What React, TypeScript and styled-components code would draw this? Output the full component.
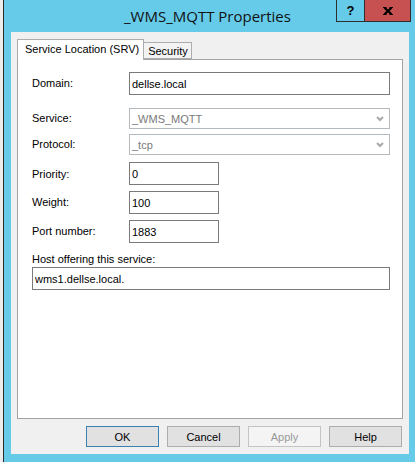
import styled, { createGlobalStyle } from "styled-components";

const GlobalStyle = createGlobalStyle`
  html, body {
    margin: 0;
    padding: 0;
    background: #ececec;
    font-family: "Liberation Sans", Arial, sans-serif;
    font-size: 11px;
    color: #000;
  }
`;

const Window = styled.div`
  margin-left: 3px;
  width: 411px;
  height: 462px;
  border-left: 1px solid #2b2b2b;
  background: #65cbe9;
  display: flex;
  flex-direction: column;
  overflow: hidden;
`;

const TitleBar = styled.div`
  height: 32px;
  display: grid;
  flex-shrink: 0;
`;

const Title = styled.div`
  grid-area: 1 / 1;
  justify-self: center;
  align-self: center;
  margin-left: -4px;
  font-family: "Open Sans", "Noto Sans", sans-serif;
  font-size: 15px;
  color: #111;
`;

const Caption = styled.div`
  grid-area: 1 / 1;
  justify-self: end;
  align-self: start;
  display: flex;
  margin-right: 4px;
`;

const CaptionButton = styled.div<{ $close?: boolean }>`
  height: 22px;
  box-sizing: border-box;
  width: ${(p) => (p.$close ? "47px" : "28px")};
  border: 1px solid #2e2e2e;
  border-top: none;
  border-right: ${(p) => (p.$close ? "1px solid #2e2e2e" : "none")};
  background: ${(p) => (p.$close ? "#c75050" : "#65cbe9")};
  display: flex;
  align-items: center;
  justify-content: center;
  font-weight: bold;
  font-size: 13px;
  color: #000;
`;

const Client = styled.div`
  margin: 0 6px 8px 7px;
  flex: 1;
  background: #f0f0f0;
  padding: 7px 6px 7px 6px;
  display: flex;
  flex-direction: column;
`;

const TabStrip = styled.div`
  height: 20px;
  display: flex;
  align-items: flex-end;
`;

const Tab = styled.div<{ $active?: boolean }>`
  box-sizing: border-box;
  position: relative;
  z-index: ${(p) => (p.$active ? 1 : 0)};
  height: ${(p) => (p.$active ? "21px" : "17px")};
  margin-bottom: ${(p) => (p.$active ? "-1px" : "0")};
  padding: ${(p) => (p.$active ? "3px 4px 0 7px" : "2px 3px 0 4px")};
  border: 1px solid #adadad;
  border-bottom: ${(p) => (p.$active ? "none" : "1px solid #adadad")};
  border-left: ${(p) => (p.$active ? "1px solid #adadad" : "none")};
  background: ${(p) => (p.$active ? "#fff" : "#f3f3f3")};
  white-space: nowrap;
`;

const Panel = styled.div`
  box-sizing: border-box;
  height: 360px;
  background: #fff;
  border: 1px solid #a3a3a3;
  padding: 12px 12px 0 14px;
  display: flex;
  flex-direction: column;
`;

const Row = styled.div<{ $top: number; $h: number; $full?: boolean }>`
  display: grid;
  grid-template-columns: ${(p) => (p.$full ? "1fr" : "97px 1fr")};
  align-items: center;
  margin-top: ${(p) => p.$top}px;
  height: ${(p) => p.$h}px;
`;

const Label = styled.div<{ $top?: number }>`
  margin-top: ${(p) => p.$top ?? 0}px;
  line-height: 13px;
`;

const TextBox = styled.input<{ $w?: number }>`
  box-sizing: border-box;
  width: ${(p) => (p.$w ? `${p.$w}px` : "100%")};
  height: 23px;
  border: 1px solid #7a7a7a;
  padding: 0 2px;
  margin: 0;
  font-family: "Liberation Sans", Arial, sans-serif;
  font-size: 11px;
  color: #000;
  background: #fff;
  outline: none;
`;

const Combo = styled.div`
  box-sizing: border-box;
  height: 21px;
  border: 1px solid #b4b9bd;
  padding: 0 5px 0 2px;
  display: flex;
  align-items: center;
  justify-content: space-between;
  color: #7a7a7a;
`;

const Buttons = styled.div`
  display: flex;
  justify-content: flex-end;
  gap: 8px;
  margin-top: 7px;
  padding-right: 1px;
`;

const Button = styled.div<{ $kind?: "default" | "disabled" }>`
  box-sizing: border-box;
  width: 73px;
  height: 21px;
  display: flex;
  align-items: center;
  justify-content: center;
  border: 1px solid
    ${(p) =>
      p.$kind === "default" ? "#3c7fb1" : p.$kind === "disabled" ? "#c4c4c4" : "#adadad"};
  background: ${(p) => (p.$kind === "disabled" ? "#f4f4f4" : "#e1e1e1")};
  color: ${(p) => (p.$kind === "disabled" ? "#9a9a9a" : "#000")};
`;

const Chevron = () => (
  <svg width="8" height="6" viewBox="0 0 8 6">
    <path d="M1 1 L4 4 L7 1" fill="none" stroke="#a9a9a9" strokeWidth="2" />
  </svg>
);

const CloseGlyph = () => (
  <svg width="10" height="8" viewBox="0 0 10 8">
    <path d="M1.5 0.8 L8.5 7.2 M8.5 0.8 L1.5 7.2" stroke="#000" strokeWidth="2.2" />
    <path d="M0 0.5 H3.5 M6.5 0.5 H10 M0 7.5 H3.5 M6.5 7.5 H10" stroke="#000" strokeWidth="1" />
  </svg>
);

export default function App() {
  return (
    <>
      <GlobalStyle />
      <Window>
        <TitleBar>
          <Title>_WMS_MQTT Properties</Title>
          <Caption>
            <CaptionButton>?</CaptionButton>
            <CaptionButton $close>
              <CloseGlyph />
            </CaptionButton>
          </Caption>
        </TitleBar>
        <Client>
          <TabStrip>
            <Tab $active>Service Location (SRV)</Tab>
            <Tab>Security</Tab>
          </TabStrip>
          <Panel>
            <Row $top={0} $h={23}>
              <Label>Domain:</Label>
              <TextBox readOnly value="dellse.local" />
            </Row>
            <Row $top={13} $h={21}>
              <Label>Service:</Label>
              <Combo>
                <span>_WMS_MQTT</span>
                <Chevron />
              </Combo>
            </Row>
            <Row $top={5} $h={21}>
              <Label>Protocol:</Label>
              <Combo>
                <span>_tcp</span>
                <Chevron />
              </Combo>
            </Row>
            <Row $top={7} $h={23}>
              <Label $top={2}>Priority:</Label>
              <TextBox $w={90} readOnly value="0" />
            </Row>
            <Row $top={6} $h={23}>
              <Label>Weight:</Label>
              <TextBox $w={90} readOnly value="100" />
            </Row>
            <Row $top={6} $h={23}>
              <Label>Port number:</Label>
              <TextBox $w={90} readOnly value="1883" />
            </Row>
            <Label $top={10}>Host offering this service:</Label>
            <Row $top={1} $h={23} $full>
              <TextBox readOnly value="wms1.dellse.local." />
            </Row>
          </Panel>
          <Buttons>
            <Button $kind="default">OK</Button>
            <Button>Cancel</Button>
            <Button $kind="disabled">Apply</Button>
            <Button>Help</Button>
          </Buttons>
        </Client>
      </Window>
    </>
  );
}
